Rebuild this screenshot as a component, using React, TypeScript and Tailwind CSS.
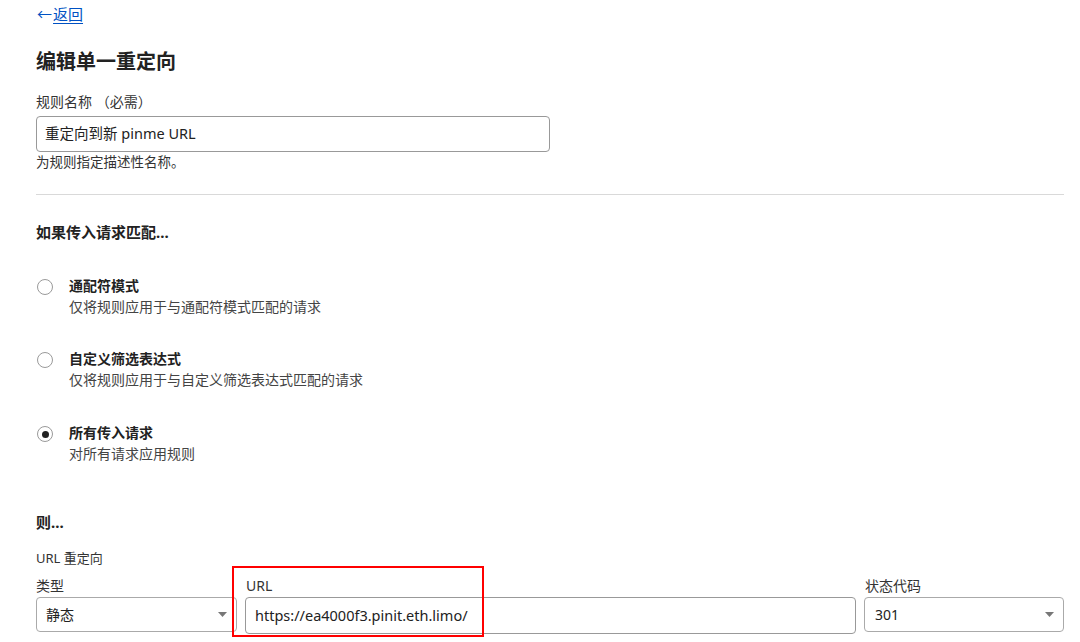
import React from "react";

const FONT = { fontFamily: '"Noto Sans", "Noto Sans CJK SC", sans-serif' };

function Radio({ checked }: { checked?: boolean }) {
  return (
    <div className="w-[16px] h-[16px] rounded-full border border-[#9a9a9a] bg-white flex items-center justify-center shrink-0">
      {checked && <div className="w-[7px] h-[7px] rounded-full bg-[#222]" />}
    </div>
  );
}

function RadioRow({ title, desc, checked, mt }: { title: string; desc: string; checked?: boolean; mt: string }) {
  return (
    <div className={`flex ${mt}`}>
      <div className="w-[33px] pt-[3px] pl-[1px]">
        <Radio checked={checked} />
      </div>
      <div className="flex flex-col">
        <div className="h-[20px] leading-[20px] text-[14px] font-bold text-[#222]">{title}</div>
        <div className="h-[20px] leading-[20px] text-[14px] text-[#444] mt-[1px]">{desc}</div>
      </div>
    </div>
  );
}

function Caret() {
  return (
    <svg width="9" height="5" viewBox="0 0 9 5" className="shrink-0">
      <path d="M0 0 L9 0 L4.5 5 Z" fill="#777" />
    </svg>
  );
}

export default function App() {
  return (
    <div className="w-[1080px] h-[642px] bg-white overflow-hidden text-[#222]" style={FONT}>
      <div className="pl-[36px] pr-[16px] flex flex-col">
        <div className="h-[28px] flex items-center text-[15px] text-[#0051c3] pl-[1px]">
          <span className="mr-[1px]">←</span>
          <span className="underline underline-offset-[3px]">返回</span>
        </div>
        <h1 className="mt-[20px] h-[28px] leading-[28px] text-[20px] font-bold text-[#222]">编辑单一重定向</h1>
        <div className="mt-[16px] h-[20px] leading-[20px] text-[14px] text-[#333]">规则名称 （必需）</div>
        <div className="mt-[4px] w-[514px] h-[36px] border border-[#999] rounded-[4px] flex items-center px-[8px] text-[14.5px] text-[#222]">
          重定向到新 pinme URL
        </div>
        <div className="mt-[1px] h-[18px] leading-[18px] text-[13.5px] text-[#333]">为规则指定描述性名称。</div>
        <div className="mt-[23px] h-px bg-[#d9d9d9]" />
        <div className="mt-[25px] h-[24px] leading-[24px] text-[15px] font-bold text-[#222]">如果传入请求匹配...</div>

        <RadioRow mt="mt-[32px]" title="通配符模式" desc="仅将规则应用于与通配符模式匹配的请求" />
        <RadioRow mt="mt-[32px]" title="自定义筛选表达式" desc="仅将规则应用于与自定义筛选表达式匹配的请求" />
        <RadioRow mt="mt-[33px]" checked title="所有传入请求" desc="对所有请求应用规则" />

        <div className="mt-[46px] h-[24px] leading-[24px] text-[15px] font-bold text-[#222]">则...</div>
        <div className="mt-[14px] h-[20px] leading-[20px] text-[13px] text-[#333]">URL 重定向</div>

        <div className="mt-[8px] flex gap-[8px]">
          <div className="w-[201px] flex flex-col">
            <div className="h-[20px] leading-[20px] text-[14px] text-[#333]">类型</div>
            <div className="mt-[1px] h-[35px] border border-[#aaa] rounded-[4px] flex items-center justify-between pl-[9px] pr-[9px] text-[14px] text-[#222]">
              <span>静态</span>
              <Caret />
            </div>
          </div>
          <div className="flex-1 flex flex-col relative">
            <div className="h-[20px] leading-[20px] text-[14px] text-[#333] pl-[1px]">URL</div>
            <div className="mt-[1px] h-[37px] border border-[#999] rounded-[4px] flex items-center px-[9px] text-[14.5px] text-[#222]">
              https://ea4000f3.pinit.eth.limo/
            </div>
            <div className="absolute left-[-13px] top-[-10px] w-[252px] h-[71px] border-2 border-[#ff0000] pointer-events-none" />
          </div>
          <div className="w-[200px] flex flex-col">
            <div className="h-[20px] leading-[20px] text-[14px] text-[#333] pl-[1px]">状态代码</div>
            <div className="mt-[1px] h-[35px] border border-[#aaa] rounded-[4px] flex items-center justify-between pl-[10px] pr-[9px] text-[14px] text-[#222]">
              <span>301</span>
              <Caret />
            </div>
          </div>
        </div>
      </div>
    </div>
  );
}
